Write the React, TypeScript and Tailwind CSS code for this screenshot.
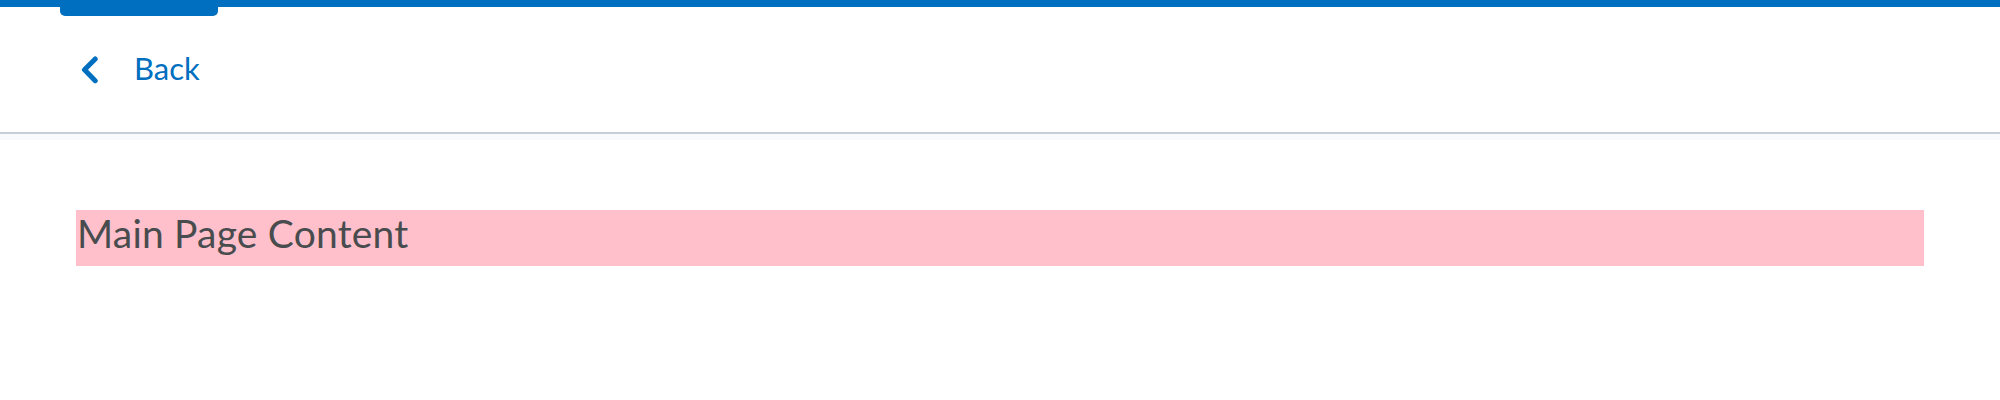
import React from "react";

export default function App() {
  return (
    <div className="w-[2000px] h-[400px] bg-white" style={{ fontFamily: "Lato, 'Noto Sans', sans-serif" }}>
      <div className="relative h-[7px] bg-[#006fbf]">
        <div className="absolute left-[60px] top-0 w-[158px] h-[16px] rounded-b-[5px] bg-[#006fbf]" />
      </div>
      <header className="h-[125px] flex items-center pl-[80px]">
        <a className="flex items-center text-[#006fbf] cursor-pointer">
          <svg width="20" height="28" viewBox="0 0 20 28" className="block">
            <polyline points="15.2,3 4.5,13.8 15.2,24.7" fill="none" stroke="#006fbf" strokeWidth="5" strokeLinecap="round" strokeLinejoin="round" />
          </svg>
          <span className="ml-[34px] text-[31px] leading-none -translate-y-[1px]">Back</span>
        </a>
      </header>
      <div className="h-[2px] bg-[#c6ced7]" />
      <div className="h-[6px] bg-[#f9fafb]" />
      <main className="px-[76px] pt-[70px]">
        <div className="h-[56px] bg-[#ffc0cb] pl-[1px] pt-[4px] text-[39px] text-[#494c4e] leading-[39px] tracking-[0.2px]">
          Main Page Content
        </div>
      </main>
    </div>
  );
}
